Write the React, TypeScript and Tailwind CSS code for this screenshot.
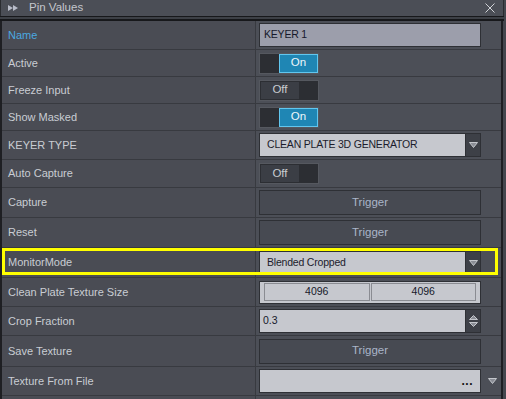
import React from "react";

const FONT = { fontFamily: '"Liberation Sans", Arial, sans-serif' };

function DownTri({ className = "" }: { className?: string }) {
  return (
    <svg width="9" height="6" viewBox="0 0 9 6" className={className}>
      <polygon points="0.5,0.5 8.5,0.5 4.5,5.5" fill="#8a8d95" stroke="#c4c7cc" strokeWidth="1" />
    </svg>
  );
}

function ToggleOn() {
  return (
    <div className="flex h-[21px] w-[60px] border border-[#55585f]">
      <div className="w-[19px] bg-[#2c2e33]" />
      <div className="flex flex-1 items-center justify-center border border-[#62c6ee] bg-[#1f86b4] text-[11.5px] text-[#eef6fb]">
        On
      </div>
    </div>
  );
}

function ToggleOff() {
  return (
    <div className="flex h-[21px] w-[60px] border border-[#55585f]">
      <div className="flex w-[40px] items-center justify-center border border-[#2c2e33] bg-[#3b3e45] text-[11.5px] text-[#c9ccd1]">
        Off
      </div>
      <div className="flex-1 bg-[#2c2e33]" />
    </div>
  );
}

function Trigger() {
  return (
    <div className="flex h-[25px] w-[222px] items-center justify-center border border-[#2e3035] bg-[#474a52] text-[11.5px] text-[#aab5c9]">
      Trigger
    </div>
  );
}

function Dropdown({ text }: { text: string }) {
  return (
    <div className="flex h-[24px] w-[222px] border border-[#2e3035]">
      <div className="flex flex-1 items-center bg-[#c6c8ce] pl-[7px] text-[10.5px] tracking-[-0.2px] text-[#1c1c2c]">
        {text}
      </div>
      <div className="flex w-[15px] items-center justify-center border-l border-[#2e3035] bg-[#3d4047]">
        <DownTri />
      </div>
    </div>
  );
}

function Row({
  label,
  h,
  blue,
  children,
  extra,
}: {
  label: string;
  h: string;
  blue?: boolean;
  children?: React.ReactNode;
  extra?: React.ReactNode;
}) {
  return (
    <div className={`flex ${h} border-b border-[#383a40]`}>
      <div
        className={`flex w-[254px] items-center border-r border-[#383a40] pl-[6px] text-[11px] ${
          blue ? "text-[#4aa9e0]" : "text-[#c9cdd3]"
        }`}
      >
        {label}
      </div>
      <div className="flex flex-1 items-center bg-[#4c4f57] pl-[3px]">
        {children}
        {extra}
      </div>
    </div>
  );
}

export default function App() {
  return (
    <div className="h-[399px] w-[506px] overflow-hidden bg-[#44474e]" style={FONT}>
      {/* Title bar */}
      <div className="flex h-[16px] w-[504px] items-center border-l border-r border-[#2a2c30] bg-[#4b4e56]">
        <svg width="10" height="6" viewBox="0 0 10 6" className="ml-[7px]">
          <polygon points="0,0 5,3 0,6" fill="#b9bdc9" />
          <polygon points="5,0 10,3 5,6" fill="#b9bdc9" />
        </svg>
        <span className="ml-[11px] text-[11.5px] text-[#c3c6cc]">Pin Values</span>
        <svg width="10" height="10" viewBox="0 0 10 10" className="ml-auto mr-[8px]">
          <path d="M0.5 0.5 L9.5 9.5 M9.5 0.5 L0.5 9.5" stroke="#d0d2d6" strokeWidth="1" />
        </svg>
      </div>
      <div className="h-px w-[504px] bg-[#17181b]" />
      <div className="h-[2px] w-[504px] bg-[#3d4046]" />
      <div className="h-[2px] w-[504px] bg-[#17181b]" />

      {/* Panel */}
      <div className="w-[503px] border-l-2 border-r-2 border-[#1e1f23] bg-[#4a4c54]">
        <Row label="Name" h="h-[29px]" blue>
          <div className="flex h-[24px] w-[222px] items-center border border-[#2e3035] bg-[#9c9eab] pl-[4px] text-[10.5px] tracking-[-0.2px] text-[#16182a]">
            KEYER 1
          </div>
        </Row>
        <Row label="Active" h="h-[27px]">
          <ToggleOn />
        </Row>
        <Row label="Freeze Input" h="h-[27px]">
          <ToggleOff />
        </Row>
        <Row label="Show Masked" h="h-[27px]">
          <ToggleOn />
        </Row>
        <Row label="KEYER TYPE" h="h-[29px]">
          <Dropdown text="CLEAN PLATE 3D GENERATOR" />
        </Row>
        <Row label="Auto Capture" h="h-[28px]">
          <ToggleOff />
        </Row>
        <Row label="Capture" h="h-[30px]">
          <Trigger />
        </Row>
        <Row label="Reset" h="h-[30px]">
          <Trigger />
        </Row>
        <div className="relative">
          <Row label="MonitorMode" h="h-[30px]">
            <Dropdown text="Blended Cropped" />
          </Row>
          <div className="pointer-events-none absolute left-0 top-0 h-[27px] w-[496px] border-[3px] border-[#ffff00]" />
        </div>
        <Row label="Clean Plate Texture Size" h="h-[29px]">
          <div className="flex h-[23px] w-[222px] items-center gap-[1px] border border-[#2e3035] bg-[#c6c8ce] px-[4px]">
            <div className="flex h-[18px] flex-1 items-center justify-center border border-[#8a8c92] text-[10.5px] text-[#16182a]">
              4096
            </div>
            <div className="flex h-[18px] flex-1 items-center justify-center border border-[#8a8c92] text-[10.5px] text-[#16182a]">
              4096
            </div>
          </div>
        </Row>
        <Row label="Crop Fraction" h="h-[29px]">
          <div className="flex h-[24px] w-[222px] border border-[#2e3035]">
            <div className="flex flex-1 items-center bg-[#c6c8ce] pl-[3px] text-[10.5px] text-[#16182a]">0.3</div>
            <div className="flex w-[15px] flex-col items-center justify-center gap-[2px] border-l border-[#2e3035] bg-[#3d4047]">
              <svg width="9" height="5" viewBox="0 0 9 5">
                <polygon points="0.5,4.5 8.5,4.5 4.5,0.5" fill="#8a8d95" stroke="#c4c7cc" strokeWidth="1" />
              </svg>
              <svg width="9" height="5" viewBox="0 0 9 5">
                <polygon points="0.5,0.5 8.5,0.5 4.5,4.5" fill="#8a8d95" stroke="#c4c7cc" strokeWidth="1" />
              </svg>
            </div>
          </div>
        </Row>
        <Row label="Save Texture" h="h-[31px]">
          <Trigger />
        </Row>
        <Row label="Texture From File" h="h-[29px]" extra={<DownTri className="ml-[7px]" />}>
          <div className="flex h-[24px] w-[222px] items-center justify-end border border-[#2e3035] bg-[#c6c8ce] pr-[7px] text-[12px] font-bold tracking-[0.5px] text-[#111]">
            ...
          </div>
        </Row>
        <Row label="" h="h-[29px]" />
      </div>
    </div>
  );
}
